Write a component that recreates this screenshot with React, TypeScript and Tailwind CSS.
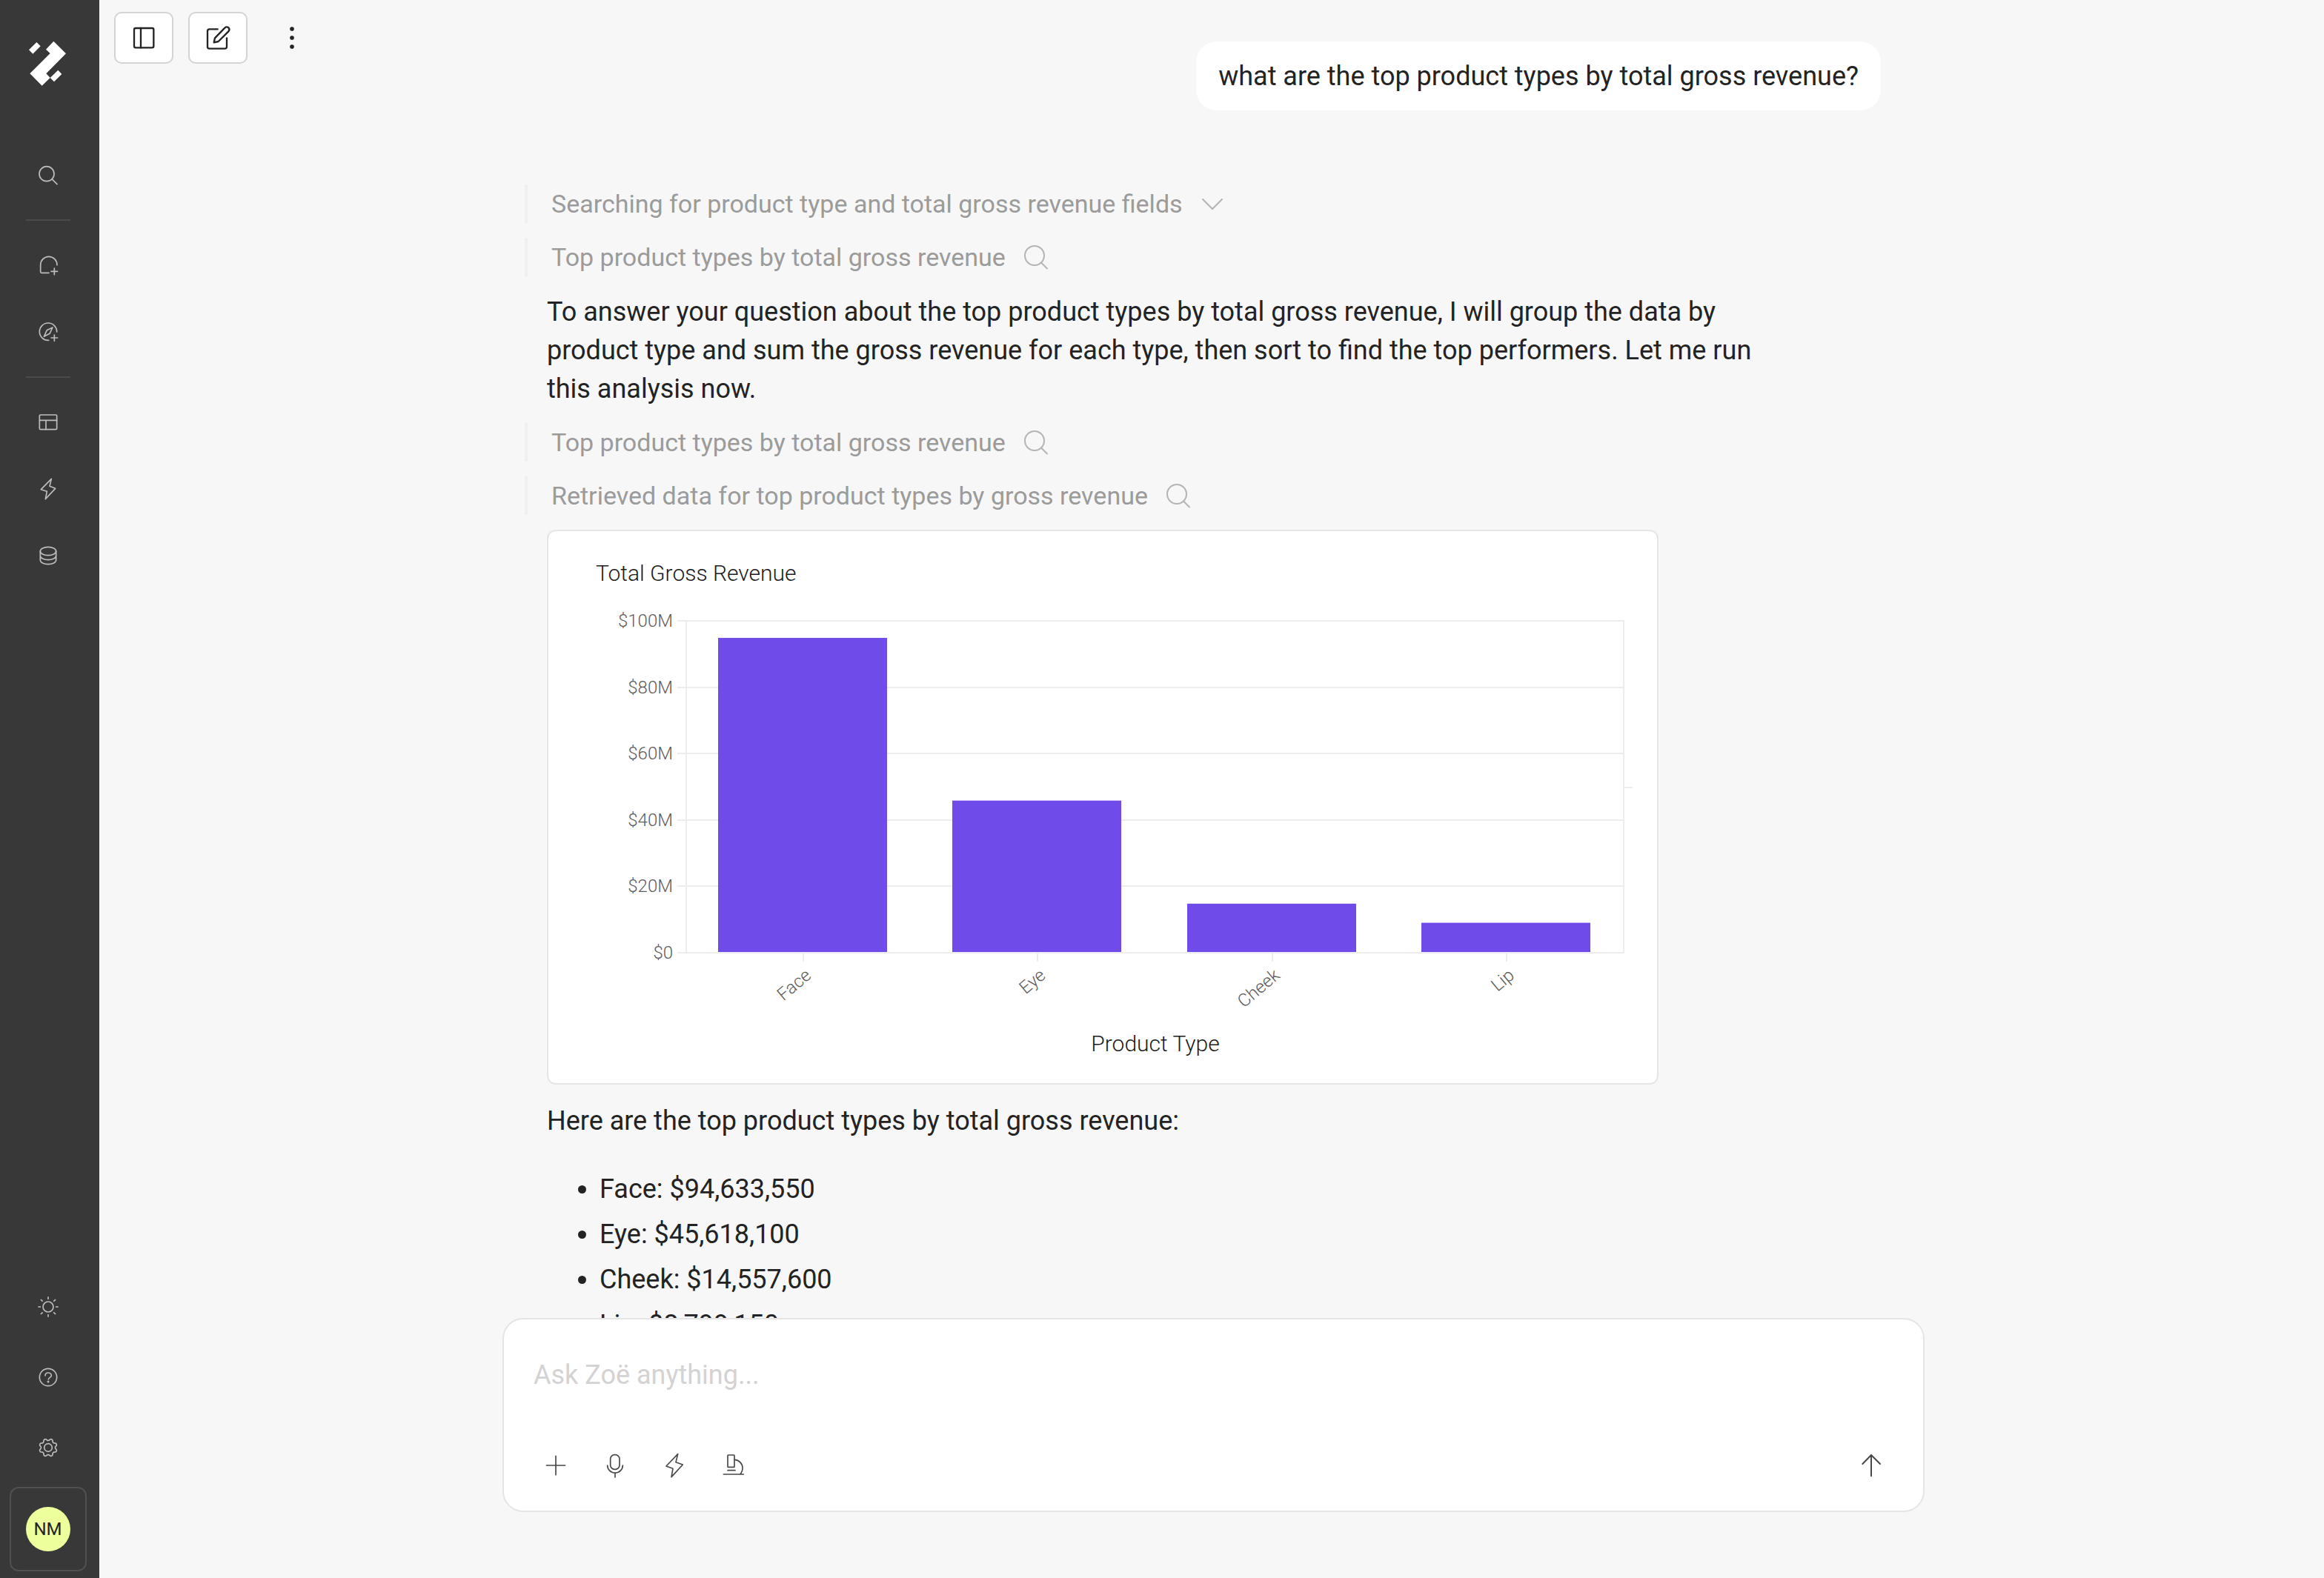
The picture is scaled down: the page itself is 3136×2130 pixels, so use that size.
import type { ReactNode } from "react";

function RailIcon({ children }: { children: ReactNode }) {
  return (
    <svg viewBox="0 0 90 90" className="size-[30px] overflow-visible" fill="none" stroke="currentColor" strokeWidth={5} strokeLinecap="round" strokeLinejoin="round" aria-hidden="true">
      {children}
    </svg>
  );
}

function ToolIcon({ children, weight = 4 }: { children: ReactNode; weight?: number }) {
  return (
    <svg viewBox="0 0 96 96" className="size-8 overflow-visible" fill="none" stroke="currentColor" strokeWidth={weight} strokeLinecap="round" strokeLinejoin="round" aria-hidden="true">
      {children}
    </svg>
  );
}

const gearPath =
  Array.from({ length: 96 }, (_, i) => {
    const a = (i / 96) * Math.PI * 2;
    const c = Math.cos(8 * a);
    const r = 32.5 - 3.8 * Math.sign(c) * Math.pow(Math.abs(c), 0.6);
    return `${i ? "L" : "M"}${(45 + r * Math.sin(a)).toFixed(1)} ${(45 - r * Math.cos(a)).toFixed(1)}`;
  }).join("") + "Z";

const railGroups: { label: string; icon: ReactNode }[][] = [
  [
    {
      label: "Search",
      icon: (
        <>
          <circle cx="39" cy="41" r="30" />
          <path d="M60 62 81 83" />
        </>
      ),
    },
  ],
  [
    {
      label: "New chat",
      icon: <path d="M81 44A33.500 34 0 0 0 14 44V72Q14 76 18 76H48M70 57V83M57 70H83" />,
    },
    {
      label: "New exploration",
      icon: (
        <>
          <path d="M80 45A35 35 0 1 0 47 79M70 57V82M57 69H83" />
          <path d="M63 27 51 52 28 64 40 38Z" />
        </>
      ),
    },
  ],
  [
    {
      label: "Dashboards",
      icon: (
        <>
          <rect x="10" y="15" width="70" height="59" rx="4" />
          <path d="M10 37H80M36 37V74" />
        </>
      ),
    },
    { label: "Automations", icon: <path d="M58 4 51 34 74 43 34 86 40 55 16 47Z" /> },
    {
      label: "Data sources",
      icon: (
        <>
          <ellipse cx="45" cy="27" rx="32" ry="17" />
          <path d="M13 27V63C13 72 27 80 45 80S77 72 77 63V27M13 45C13 54 27 62 45 62S77 54 77 45" />
        </>
      ),
    },
  ],
];

const railFooter: { label: string; icon: ReactNode }[] = [
  {
    label: "Theme",
    icon: (
      <>
        <circle cx="45" cy="45" r="21" />
        <path strokeLinecap="butt" d="M45 4V15M45 75V86M4 45H15M75 45H86M15 15 23 23M67 67 75 75M75 15 67 23M23 67 15 75" />
      </>
    ),
  },
  {
    label: "Help",
    icon: (
      <>
        <circle cx="45" cy="45" r="35" />
        <path d="M33 39C33 31 39 27 45 27S58 31 58 38C58 46 46 46 46 54" />
        <circle cx="45" cy="63" r="2" fill="currentColor" />
      </>
    ),
  },
  {
    label: "Settings",
    icon: (
      <>
        <path d={gearPath} />
        <circle cx="45" cy="45" r="16" />
      </>
    ),
  },
];

function Rail() {
  return (
    <nav aria-label="Main" className="flex w-[134px] shrink-0 flex-col items-center bg-[#383838] pt-[50px] pr-[5px] pb-[9px] text-[#bdbdbd]">
      <a href="#" aria-label="Home" className="mb-[71px] block">
        <svg viewBox="0 0 210 210" className="size-[70px] fill-white" aria-hidden="true">
          <path d="M58 21 74 37 43 68 27 52Z" />
          <path d="M127 17 177 67 97 148 113 165 80 197 31 148 113 66 96 50Z" />
          <path d="M145 134 160 150 129 181 113 165Z" />
        </svg>
      </a>
      {railGroups.map((group, i) => (
        <div key={i} className="flex flex-col items-center">
          {i > 0 && <div className="my-[15px] h-[2px] w-[60px] bg-[#4a4a4a]" />}
          {group.map((item) => (
            <button key={item.label} type="button" aria-label={item.label} className="flex h-[90px] w-[90px] items-center justify-center">
              <RailIcon>{item.icon}</RailIcon>
            </button>
          ))}
        </div>
      ))}
      <div className="mt-auto flex flex-col items-center">
        {railFooter.map((item) => (
          <button key={item.label} type="button" aria-label={item.label} className="flex h-[95px] w-[90px] items-center justify-center">
            <RailIcon>{item.icon}</RailIcon>
          </button>
        ))}
        <button type="button" className="mt-[6px] flex h-[114px] w-[104px] items-center justify-center rounded-xl border-2 border-[#505050]">
          <span className="flex size-[60px] items-center justify-center rounded-full bg-[#ecff9c] text-[24px] text-[#232323]">NM</span>
        </button>
      </div>
    </nav>
  );
}

function SearchGlyph() {
  return (
    <svg viewBox="0 0 34 34" className="size-[34px]" fill="none" stroke="#b4b4b4" strokeWidth={2} strokeLinecap="round" aria-hidden="true">
      <circle cx="15" cy="15" r="13" />
      <path d="M24 24.500 32 32.500" />
    </svg>
  );
}

function ChevronGlyph() {
  return (
    <svg viewBox="0 0 34 34" className="size-[34px]" fill="none" stroke="#b4b4b4" strokeWidth={2} strokeLinecap="round" aria-hidden="true">
      <path d="M3 11 16 24 29 11" />
    </svg>
  );
}

function Step({ text, glyph }: { text: string; glyph: ReactNode }) {
  return (
    <button type="button" className="flex items-center gap-6 self-start border-l-4 border-[#f0f0f0] pl-8 text-left text-[34px] leading-[52px] text-[#9b9b9b]">
      {text}
      {glyph}
    </button>
  );
}

const TOP = 120;
const BOTTOM = 568;
const LEFT = 186;
const RIGHT = 1451;
const products = [
  { name: "Face", value: 94633550 },
  { name: "Eye", value: 45618100 },
  { name: "Cheek", value: 14557600 },
  { name: "Lip", value: 8799150 },
];

function RevenueChart() {
  const step = (RIGHT - LEFT) / products.length;
  const y = (v: number) => BOTTOM - (v / 100000000) * (BOTTOM - TOP);
  return (
    <svg viewBox="0 0 1496 745" className="block h-auto w-full" role="img" aria-label="Total gross revenue by product type">
      <text x="64" y="67" fontSize="30" fontWeight="300" fill="#1c1c1c">Total Gross Revenue</text>
      {[100, 80, 60, 40, 20, 0].map((m) => (
        <g key={m}>
          <path d={`M${LEFT - 12} ${Math.round(y(m * 1000000)) + 1}H${RIGHT}`} stroke="#ededed" strokeWidth="2" />
          <text x="168" y={y(m * 1000000) + 9} fontSize="24" fontWeight="300" fill="#5c5c5c" textAnchor="end">
            {m ? `$${m}M` : "$0"}
          </text>
        </g>
      ))}
      <path d={`M${LEFT} ${TOP}V${BOTTOM + 2}M${RIGHT} ${TOP}V${BOTTOM + 2}M${RIGHT} 346H${RIGHT + 12}`} stroke="#ededed" strokeWidth="2" fill="none" />
      {products.map((p, i) => {
        const cx = LEFT + step * (i + 0.5);
        return (
          <g key={p.name}>
            <path d={`M${Math.round(cx)} ${BOTTOM}V${BOTTOM + 13}`} stroke="#ededed" strokeWidth="2" />
            <rect x={Math.round(cx) - 115} y={y(p.value)} width="228" height={BOTTOM - y(p.value)} fill="#6f4bea" />
            <text transform={`translate(${cx + 12} ${BOTTOM + 34}) rotate(-40)`} fontSize="24" fontWeight="300" fill="#5c5c5c" textAnchor="end">
              {p.name}
            </text>
          </g>
        );
      })}
      <text x="819" y="702" fontSize="30" fontWeight="300" fill="#1c1c1c" textAnchor="middle">Product Type</text>
    </svg>
  );
}

function Toolbar() {
  return (
    <div className="absolute top-4 left-5 flex gap-5 text-[#232323]">
      <button type="button" aria-label="Toggle sidebar" className="flex h-[70px] w-20 items-center justify-center rounded-[10px] border-2 border-[#d5d3d3] bg-white">
        <ToolIcon weight={7}>
          <rect x="9" y="9" width="79" height="79" rx="6" />
          <path d="M36 9V88" />
        </ToolIcon>
      </button>
      <button type="button" aria-label="New conversation" className="flex h-[70px] w-20 items-center justify-center rounded-[10px] border-2 border-[#d5d3d3] bg-white">
        <ToolIcon weight={7}>
          <path d="M47 13H14Q6 13 6 21V84Q6 92 14 92H76Q84 92 84 84V49" />
          <path d="M32 67 36 49 76 8C80 3 86 3 91 7C95 12 95 18 91 22L50 63Z" />
        </ToolIcon>
      </button>
      <button type="button" aria-label="More options" className="flex h-[70px] w-20 items-center justify-center">
        <ToolIcon>
          <g fill="currentColor" stroke="none">
            <circle cx="48" cy="12" r="8.500" />
            <circle cx="48" cy="48" r="8.500" />
            <circle cx="48" cy="84" r="8.500" />
          </g>
        </ToolIcon>
      </button>
    </div>
  );
}

const composerTools: { label: string; icon: ReactNode }[] = [
  { label: "Add", icon: <path d="M48 10V86M10 48H86" /> },
  {
    label: "Dictate",
    icon: (
      <>
        <rect x="29" y="5" width="37" height="59" rx="17" />
        <path d="M17 48A31 30 0 0 0 79 48M48 78V96" />
      </>
    ),
  },
  { label: "Automate", icon: <path d="M62 2 54 35 82 45 36 95 42 61 15 51Z" /> },
  {
    label: "Research",
    icon: (
      <>
        <rect x="24" y="6" width="27" height="49" rx="2" />
        <path d="M24 68H54M7 84H88M52 25C70 26 84 41 84 58C84 68 80 78 74 84" />
      </>
    ),
  },
];

function Composer() {
  return (
    <form onSubmit={(e) => e.preventDefault()} className="mx-auto mb-[89px] w-full max-w-[1919px] shrink-0 rounded-[28px] border-2 border-[#e5e5e5] bg-white px-10 pt-[49px] pb-[45px]">
      <textarea
        aria-label="Message"
        rows={1}
        placeholder="Ask Zoë anything..."
        className="block h-[52px] w-full resize-none overflow-hidden bg-transparent text-[36px] leading-[52px] text-[#232323] outline-none placeholder:text-[#d4d2d2]"
      />
      <div className="mt-20 flex items-center gap-12 px-[14px] text-[#484848]">
        {composerTools.map((tool) => (
          <button key={tool.label} type="button" aria-label={tool.label}>
            <ToolIcon weight={5}>{tool.icon}</ToolIcon>
          </button>
        ))}
        <button type="submit" aria-label="Send" className="ml-auto">
          <ToolIcon weight={6}>
            <path d="M48 91V6M13 42 48 6 84 42" />
          </ToolIcon>
        </button>
      </div>
    </form>
  );
}

export default function App() {
  return (
    <div className="flex h-screen bg-[#f7f7f7] font-[Roboto,sans-serif] text-[#232323]">
      <Rail />
      <main className="relative flex min-w-0 flex-1 flex-col pl-[5px]">
        <Toolbar />
        <div className="min-h-0 flex-1 overflow-hidden">
          <div className="mx-auto flex max-w-[1919px] flex-col pt-14 pr-[59px] pl-[30px] text-[36px]">
            <p className="mb-[100px] self-end rounded-[28px] bg-white px-[30px] pt-[21px] pb-5 leading-[52px]">
              what are the top product types by total gross revenue?
            </p>
            <div className="flex flex-col gap-5">
              <Step text="Searching for product type and total gross revenue fields" glyph={<ChevronGlyph />} />
              <Step text="Top product types by total gross revenue" glyph={<SearchGlyph />} />
              <p className="ml-[30px] max-w-[1640px] pt-[2px] leading-[52px]">
                To answer your question about the top product types by total gross revenue, I will group the data by product type and sum the gross revenue for each type, then sort to find the top performers. Let me run this analysis now.
              </p>
              <Step text="Top product types by total gross revenue" glyph={<SearchGlyph />} />
              <Step text="Retrieved data for top product types by gross revenue" glyph={<SearchGlyph />} />
              <div className="ml-[30px] max-w-[1500px] overflow-hidden rounded-xl border-2 border-[#e5e5e5] bg-white">
                <RevenueChart />
              </div>
              <p className="ml-[30px] pt-[3px] leading-[52px]">Here are the top product types by total gross revenue:</p>
            </div>
            <ul className="mt-9 ml-[30px] list-disc pl-[71px] leading-[61px]">
              {products.map((p) => (
                <li key={p.name}>
                  {p.name}: ${p.value.toLocaleString("en-US")}
                </li>
              ))}
            </ul>
          </div>
        </div>
        <Composer />
      </main>
    </div>
  );
}
